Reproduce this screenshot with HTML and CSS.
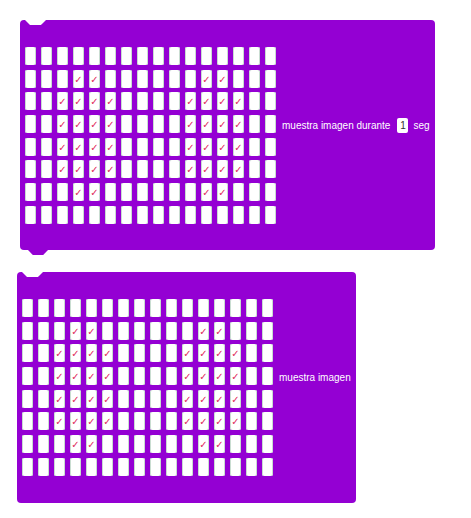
FILE: index.html
```html
<!DOCTYPE html>
<html lang="es">
<head>
<meta charset="utf-8">
<title>muestra imagen</title>
<link rel="stylesheet" href="styles.css">
</head>
<body>
<div class="block b1">
  <div class="grid">
    <i></i><i></i><i></i><i></i><i></i><i></i><i></i><i></i><i></i><i></i><i></i><i></i><i></i><i></i><i></i><i></i>
    <i></i><i></i><i></i><i>✓</i><i>✓</i><i></i><i></i><i></i><i></i><i></i><i></i><i>✓</i><i>✓</i><i></i><i></i><i></i>
    <i></i><i></i><i>✓</i><i>✓</i><i>✓</i><i>✓</i><i></i><i></i><i></i><i></i><i>✓</i><i>✓</i><i>✓</i><i>✓</i><i></i><i></i>
    <i></i><i></i><i>✓</i><i>✓</i><i>✓</i><i>✓</i><i></i><i></i><i></i><i></i><i>✓</i><i>✓</i><i>✓</i><i>✓</i><i></i><i></i>
    <i></i><i></i><i>✓</i><i>✓</i><i>✓</i><i>✓</i><i></i><i></i><i></i><i></i><i>✓</i><i>✓</i><i>✓</i><i>✓</i><i></i><i></i>
    <i></i><i></i><i>✓</i><i>✓</i><i>✓</i><i>✓</i><i></i><i></i><i></i><i></i><i>✓</i><i>✓</i><i>✓</i><i>✓</i><i></i><i></i>
    <i></i><i></i><i></i><i>✓</i><i>✓</i><i></i><i></i><i></i><i></i><i></i><i></i><i>✓</i><i>✓</i><i></i><i></i><i></i>
    <i></i><i></i><i></i><i></i><i></i><i></i><i></i><i></i><i></i><i></i><i></i><i></i><i></i><i></i><i></i><i></i>
  </div>
  <div class="label">muestra imagen durante<span class="num">1</span>seg</div>
</div>
<div class="block b2">
  <div class="grid">
    <i></i><i></i><i></i><i></i><i></i><i></i><i></i><i></i><i></i><i></i><i></i><i></i><i></i><i></i><i></i><i></i>
    <i></i><i></i><i></i><i>✓</i><i>✓</i><i></i><i></i><i></i><i></i><i></i><i></i><i>✓</i><i>✓</i><i></i><i></i><i></i>
    <i></i><i></i><i>✓</i><i>✓</i><i>✓</i><i>✓</i><i></i><i></i><i></i><i></i><i>✓</i><i>✓</i><i>✓</i><i>✓</i><i></i><i></i>
    <i></i><i></i><i>✓</i><i>✓</i><i>✓</i><i>✓</i><i></i><i></i><i></i><i></i><i>✓</i><i>✓</i><i>✓</i><i>✓</i><i></i><i></i>
    <i></i><i></i><i>✓</i><i>✓</i><i>✓</i><i>✓</i><i></i><i></i><i></i><i></i><i>✓</i><i>✓</i><i>✓</i><i>✓</i><i></i><i></i>
    <i></i><i></i><i>✓</i><i>✓</i><i>✓</i><i>✓</i><i></i><i></i><i></i><i></i><i>✓</i><i>✓</i><i>✓</i><i>✓</i><i></i><i></i>
    <i></i><i></i><i></i><i>✓</i><i>✓</i><i></i><i></i><i></i><i></i><i></i><i></i><i>✓</i><i>✓</i><i></i><i></i><i></i>
    <i></i><i></i><i></i><i></i><i></i><i></i><i></i><i></i><i></i><i></i><i></i><i></i><i></i><i></i><i></i><i></i>
  </div>
  <div class="label">muestra imagen</div>
</div>
</body>
</html>
```
FILE: styles.css
```css
html, body {
  margin: 0;
  background: #ffffff;
}
body {
  padding-top: 20px;
  font-family: "Liberation Sans", Arial, sans-serif;
}
.block {
  position: relative;
  display: flex;
  align-items: flex-start;
  box-sizing: border-box;
  height: 230px;
  padding: 27px 5px 26px 5px;
  background: #9400d3;
  border-radius: 4px;
}
.b1 {
  width: 415px;
  margin-left: 20px;
}
.b2 {
  width: 339px;
  height: 231px;
  margin-left: 17px;
  margin-top: 22px;
}
.block::before {
  content: "";
  position: absolute;
  top: 0;
  left: 5px;
  width: 21px;
  height: 5px;
  background: #ffffff;
  clip-path: polygon(0 0, 100% 0, 76% 100%, 24% 100%);
}
.block::after {
  content: "";
  position: absolute;
  top: 100%;
  left: 8px;
  width: 20px;
  height: 5px;
  background: #9400d3;
  clip-path: polygon(0 0, 100% 0, 76% 100%, 24% 100%);
}
.grid {
  display: grid;
  grid-template-columns: repeat(16, 11px);
  grid-auto-rows: 18px;
  column-gap: 5px;
  row-gap: 4.7px;
  flex: none;
}
.grid i {
  display: flex;
  align-items: center;
  justify-content: center;
  background: #ffffff;
  border-radius: 2px;
  box-shadow: inset 1px 0 #c9ddd1, inset -1px 0 #c9ddd1;
  font-style: normal;
  font-family: "DejaVu Sans", sans-serif;
  font-size: 10px;
  line-height: 1;
  color: #e0285c;
  padding-top: 2px;
  box-sizing: border-box;
}
.label {
  display: flex;
  align-items: center;
  height: 15px;
  margin-top: 71px;
  margin-left: 6px;
  color: #ffffff;
  font-size: 10px;
  white-space: nowrap;
}
.num {
  width: 11px;
  height: 15px;
  margin: 0 5px 0 7px;
  background: #ffffff;
  color: #333333;
  border-radius: 2px;
  text-align: center;
  line-height: 15px;
}
```
